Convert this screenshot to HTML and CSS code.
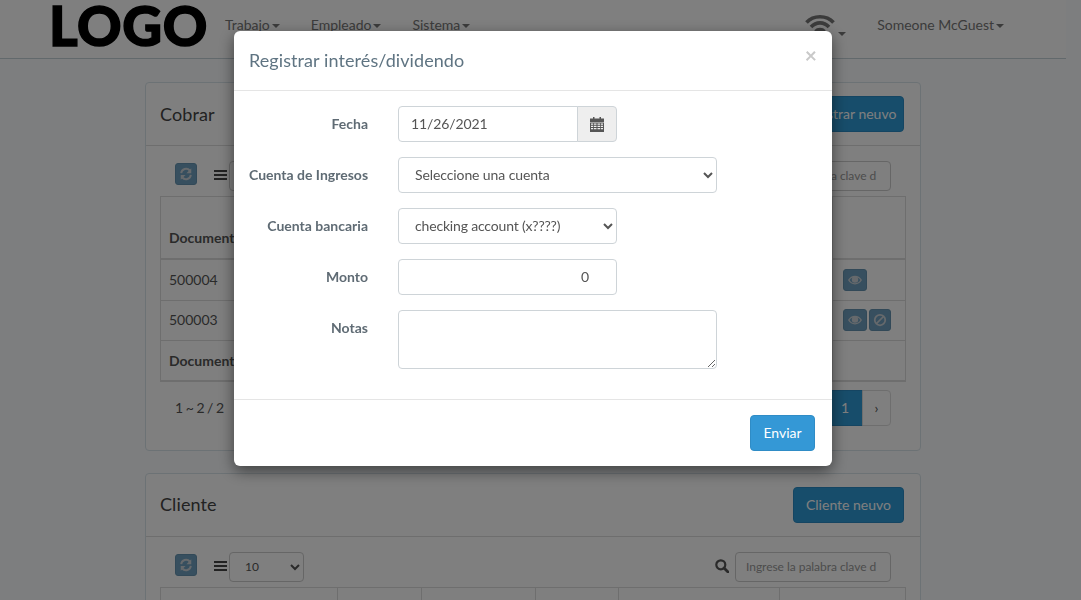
FILE: index.html
```html
<!DOCTYPE html>
<html lang="es">
<head>
<meta charset="utf-8">
<title>Registrar interés/dividendo</title>
<link rel="stylesheet" href="styles.css">
</head>
<body>
<header class="navbar">
  <a class="logo">LOGO</a>
  <nav class="nav">
    <a class="nav-link">Trabajo<i class="caret"></i></a>
    <a class="nav-link">Empleado<i class="caret"></i></a>
    <a class="nav-link">Sistema<i class="caret"></i></a>
  </nav>
  <div class="nav-right">
    <a class="wifi">
      <svg width="30" height="24" viewBox="0 0 30 24"><g fill="none" stroke="#777" stroke-width="3.6"><path d="M1.500 8.500C8.500 .8 21.500 .8 28.500 8.500"/><path d="M6 13C11 7.500 19 7.500 24 13"/><path d="M10.500 17.500C13 15 17 15 19.500 17.500"/></g></svg>
      <i class="caret"></i>
    </a>
    <a class="nav-link">Someone McGuest<i class="caret"></i></a>
  </div>
</header>

<main class="page">
  <section class="panel">
    <div class="panel-head">
      <h2>Cobrar</h2>
      <button class="btn btn-dark">Registrar neuvo</button>
    </div>
    <div class="panel-body">
      <div class="toolbar">
        <div class="tool-left">
          <button class="btn-xs up"><svg class="ico" viewBox="0 0 16 16"><use href="#i-refresh"/></svg></button>
          <svg class="bars" viewBox="0 0 13 12"><path d="M0 1h13v2H0zM0 5h13v2H0zM0 9h13v2H0z"/></svg>
          <select class="len"><option>10</option></select>
        </div>
        <div class="tool-right">
          <svg class="search" viewBox="0 0 14 14"><use href="#i-search"/></svg>
          <input class="kw" placeholder="Ingrese la palabra clave d">
        </div>
      </div>
      <table class="grid grid-a">
        <thead><tr><th class="c1">Documento</th><th></th><th class="c-last"></th></tr></thead>
        <tbody>
          <tr class="first"><td>500004</td><td></td><td class="acts"><button class="btn-xs wide"><svg class="ico" viewBox="0 0 16 16"><use href="#i-eye"/></svg></button></td></tr>
          <tr><td>500003</td><td></td><td class="acts"><button class="btn-xs wide"><svg class="ico" viewBox="0 0 16 16"><use href="#i-eye"/></svg></button><button class="btn-xs"><svg class="ico" viewBox="0 0 16 16"><use href="#i-ban"/></svg></button></td></tr>
        </tbody>
        <tfoot><tr><th>Documento</th><th></th><th></th></tr></tfoot>
      </table>
      <div class="pager-row">
        <span class="count">1 ~ 2 / 2</span>
        <div class="pager"><a class="pg">‹</a><a class="pg on">1</a><a class="pg">›</a></div>
      </div>
    </div>
  </section>

  <section class="panel">
    <div class="panel-head">
      <h2>Cliente</h2>
      <button class="btn btn-dark">Cliente neuvo</button>
    </div>
    <div class="panel-body">
      <div class="toolbar">
        <div class="tool-left">
          <button class="btn-xs up"><svg class="ico" viewBox="0 0 16 16"><use href="#i-refresh"/></svg></button>
          <svg class="bars" viewBox="0 0 13 12"><path d="M0 1h13v2H0zM0 5h13v2H0zM0 9h13v2H0z"/></svg>
          <select class="len"><option>10</option></select>
        </div>
        <div class="tool-right">
          <svg class="search" viewBox="0 0 14 14"><use href="#i-search"/></svg>
          <input class="kw" placeholder="Ingrese la palabra clave d">
        </div>
      </div>
      <table class="grid grid-b">
        <thead><tr><th></th><th></th><th></th><th></th><th></th><th></th></tr></thead>
      </table>
    </div>
  </section>
</main>

<div class="backdrop"></div>
<div class="modal">
  <div class="modal-head">
    <h4>Registrar interés/dividendo</h4>
    <span class="close">×</span>
  </div>
  <form class="modal-body">
    <div class="row">
      <label>Fecha</label>
      <div class="group">
        <input class="ctl date" value="11/26/2021">
        <span class="addon"><svg width="14" height="15" viewBox="0 0 14 15"><path fill="#555" d="M3 0h1.500v1.500h5V0H11v1.500h3V5H0V1.500h3z"/><path fill="#555" d="M0 5.500h14V15H0zM1 6.500V7.800h2.200V6.500zM4 6.500V7.800h2.500V6.500zM7.500 6.500V7.800H10V6.500zM10.800 6.500V7.800H13V6.500zM1 8.800V10h2.200V8.800zM4 8.800V10h2.500V8.800zM7.500 8.800V10H10V8.800zM10.800 8.800V10H13V8.800zM1 11v1.300h2.200V11zM4 11v1.300h2.500V11zM7.500 11v1.300H10V11zM10.800 11v1.300H13V11z" fill-rule="evenodd"/></svg></span>
      </div>
    </div>
    <div class="row">
      <label>Cuenta de Ingresos</label>
      <select class="ctl full"><option>Seleccione una cuenta</option></select>
    </div>
    <div class="row">
      <label>Cuenta bancaria</label>
      <select class="ctl half"><option>checking account (x????)</option></select>
    </div>
    <div class="row">
      <label>Monto</label>
      <input class="ctl half num" value="0">
    </div>
    <div class="row">
      <label>Notas</label>
      <textarea class="ctl full area"></textarea>
    </div>
  </form>
  <div class="modal-foot">
    <button class="btn btn-blue">Enviar</button>
  </div>
</div>

<svg class="defs" width="0" height="0">
  <defs>
    <symbol id="i-refresh" viewBox="0 0 16 16"><g fill="none" stroke="#ccd3d8" stroke-width="2.200"><path d="M2.500 7A5.600 5.600 0 0 1 12.300 4"/><path d="M13.500 9A5.600 5.600 0 0 1 3.700 12"/></g><path fill="#ccd3d8" d="M14 1.500V7H8.500zM2 14.500V9h5.500z"/></symbol>
    <symbol id="i-search" viewBox="0 0 14 14"><circle cx="5.800" cy="5.800" r="4.500" fill="none" stroke="#555" stroke-width="2.200"/><path d="M9 9l4 4" stroke="#555" stroke-width="2.800" stroke-linecap="round"/></symbol>
    <symbol id="i-eye" viewBox="0 0 16 16"><path fill="#ccd3d8" fill-rule="evenodd" d="M0 8c2-3.500 4.800-5 8-5s6 1.500 8 5c-2 3.500-4.800 5-8 5s-6-1.500-8-5zm1.800 0c1.600 2.400 3.700 3.800 6.200 3.800s4.600-1.400 6.200-3.800c-.9-1.400-2-2.400-3.300-3 .5.700.8 1.500.8 2.400a3.700 3.700 0 1 1-7.400 0c0-.9.300-1.700.8-2.400-1.300.600-2.400 1.600-3.300 3z"/></symbol>
    <symbol id="i-ban" viewBox="0 0 16 16"><circle cx="8" cy="8" r="6" fill="none" stroke="#ccd3d8" stroke-width="2"/><path d="M4 12l8-8" stroke="#ccd3d8" stroke-width="2"/></symbol>
  </defs>
</svg>
</body>
</html>
```
FILE: styles.css
```css
* { box-sizing: border-box; }
html, body { height: 100%; }
body {
  margin: 0;
  overflow: hidden;
  background: #fafdff;
  color: #555;
  font: 14px/20px Lato, "Open Sans", sans-serif;
}
button, input, select, textarea { font: inherit; color: inherit; }

.navbar {
  display: flex;
  align-items: center;
  width: 1066px;
  height: 59px;
  padding: 0 62px 8px 49px;
  border-bottom: 1px solid #c5d2d9;
  background: #fff;
}
.logo {
  width: 176px;
  color: #000;
  font: 900 55px/50px Lato, sans-serif;
  letter-spacing: .6px;
  -webkit-text-stroke: 1.4px #000;
}
.nav { display: flex; gap: 31px; }
.nav-link { color: #777; white-space: nowrap; }
.caret {
  display: inline-block;
  margin-left: 2px;
  vertical-align: middle;
  border-top: 4px solid currentColor;
  border-left: 4px solid transparent;
  border-right: 4px solid transparent;
}
.nav-right { display: flex; align-items: center; gap: 31px; margin-left: auto; }
.wifi { display: flex; align-items: flex-start; color: #777; margin-top: 2px; }
.wifi .caret { margin: 18px 0 0 3px; }

.page { padding: 23.4px 0 0 145px; }
.panel {
  width: 776px;
  margin-bottom: 22px;
  border: 1px solid #d9e4ea;
  border-radius: 4px;
  background: #fff;
}
.panel-head {
  display: flex;
  align-items: center;
  justify-content: space-between;
  height: 62.4px;
  padding: 0 16px 0 14px;
  border-bottom: 1px solid #ddd;
}
.panel-head h2 { margin: 0 0 1px; color: #444; font-size: 18px; font-weight: 400; letter-spacing: .1px; }
.btn {
  height: 36px;
  padding: 0 12px;
  border: 1px solid transparent;
  border-radius: 4px;
  color: #fff;
  font-size: 14px;
}
.btn-dark { background: #2f9bd6; border-color: #2a8bc4; width: 111px; padding: 0; }
.btn-blue { background: #3498d6; border-color: #2f8cc6; width: 65px; padding: 0 0 1px; }
.panel-body { padding: 15px 14px 0; }
.toolbar { display: flex; justify-content: space-between; align-items: center; height: 30px; padding: 0 15px; margin-bottom: 5px; }
.tool-left, .tool-right { display: flex; align-items: center; }
.btn-xs {
  display: inline-flex;
  align-items: center;
  justify-content: center;
  width: 22px;
  height: 22px;
  padding: 0;
  border: 1px solid #6593b0;
  border-radius: 3px;
  background: #6f9fbe;
  vertical-align: middle;
}
.btn-xs.up { margin-bottom: 4px; }
.btn-xs.wide { width: 24px; }
.ico { width: 14px; height: 14px; }
.bars { width: 13px; height: 12px; margin: 0 2px 2px 17px; fill: #444; }
.len {
  width: 75px;
  height: 30px;
  padding: 0 11px;
  border: 1px solid #ccc;
  border-radius: 4px;
  background: #fff;
  font-size: 12px;
}
.search { width: 14px; height: 14px; margin-right: 6px; margin-bottom: 2px; }
.kw {
  width: 156px;
  height: 30px;
  padding: 0 10px;
  border: 1px solid #ccc;
  border-radius: 4px;
  background: #fff;
  font-size: 12px;
  letter-spacing: -.04px;
}
.kw::placeholder { color: #999; }

.grid { width: 746px; border-collapse: collapse; table-layout: fixed; }
.grid th, .grid td { border: 1px solid #ddd; padding: 8px; text-align: left; vertical-align: bottom; overflow: hidden; white-space: nowrap; }
.grid thead th { height: 63px; border-bottom-width: 2px; padding-bottom: 10px; }
.grid tbody td { height: 40px; vertical-align: middle; }
.grid tbody .first td { height: 41px; }
.grid tfoot th { height: 41px; vertical-align: middle; border-top-width: 1px; border-bottom-width: 2px; }
.grid-a .c1 { width: 100px; }
.grid-a .c-last { width: 73px; }
.grid .acts { padding: 0 10px; white-space: nowrap; font-size: 0; }
.acts .btn-xs { margin-right: 2px; }
.grid-b thead th { height: 40px; }
.grid-b th:nth-child(1) { width: 177px; }
.grid-b th:nth-child(2) { width: 84px; }
.grid-b th:nth-child(3) { width: 114px; }
.grid-b th:nth-child(4) { width: 83px; }
.grid-b th:nth-child(5) { width: 161px; }

.pager-row { display: flex; justify-content: space-between; align-items: center; height: 36px; margin-top: 8px; margin-bottom: 24px; padding: 0 15px; }
.count { letter-spacing: -.5px; }
.pager { display: flex; }
.pg {
  display: flex;
  align-items: center;
  justify-content: center;
  height: 36px;
  width: 29px;
  margin-left: -1px;
  border: 1px solid #ddd;
  background: #fff;
}
.pg:last-child { border-radius: 0 4px 4px 0; }
.pg.on { width: 36px; border-color: #2a8bc4; background: #2f9bd6; color: #fff; }

.backdrop { position: fixed; inset: 0; background: rgba(0, 0, 0, .5); }
.modal {
  position: fixed;
  left: 234px;
  top: 31px;
  width: 598px;
  height: 435px;
  display: flex;
  flex-direction: column;
  border-radius: 6px;
  background: #fff;
  box-shadow: 0 5px 15px rgba(0, 0, 0, .5);
}
.modal-head {
  display: flex;
  align-items: center;
  justify-content: space-between;
  height: 60px;
  padding: 0 15px;
  border-bottom: 1px solid #e5e5e5;
}
.modal-head h4 { margin: 0 0 2px; color: #5f7482; font-size: 18px; font-weight: 400; letter-spacing: .08px; }
.close { margin: -12px 0 0; color: #c9c9c9; font-size: 21px; font-weight: 700; line-height: 1; }
.modal-body { flex: 1; display: flex; flex-direction: column; gap: 15px; padding: 15px 15px 0; }
.row { display: flex; align-items: flex-start; }
.row label {
  width: 119px;
  margin-right: 30px;
  padding-top: 8px;
  color: #5f6b74;
  font-weight: 700;
  text-align: right;
  white-space: nowrap;
}
.ctl {
  height: 36px;
  padding: 0 12px 2px;
  border: 1px solid #ced4d8;
  border-radius: 4px;
  background: #fff;
  color: #555;
  outline: 0;
  letter-spacing: -.1px;
}
select.half { letter-spacing: -.17px; }
.full { width: 319px; }
.half { width: 219px; }
.num { text-align: right; padding-right: 27px; }
.area { height: 59px; padding: 6px 12px; resize: vertical; }
.group { display: flex; }
.date { width: 180px; border-radius: 4px 0 0 4px; }
.addon {
  display: flex;
  align-items: center;
  justify-content: center;
  width: 40px;
  height: 36px;
  margin-left: -1px;
  border: 1px solid #ced4d8;
  border-radius: 0 4px 4px 0;
  background: #eee;
}
.modal-foot {
  display: flex;
  justify-content: flex-end;
  height: 67px;
  padding: 15px 17px 0;
  border-top: 1px solid #e5e5e5;
}
.defs { position: absolute; }
```
